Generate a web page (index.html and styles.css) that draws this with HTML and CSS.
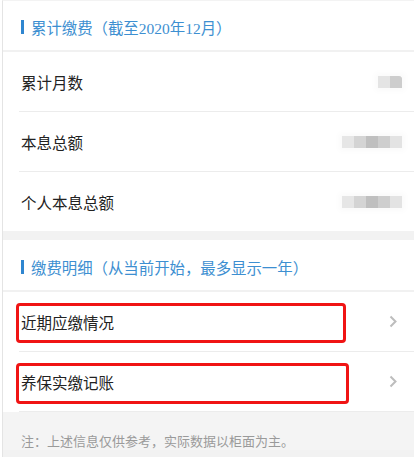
FILE: index.html
```html
<!DOCTYPE html>
<html lang="zh-CN">
<head>
    <meta charset="UTF-8">
    <meta name="viewport" content="width=device-width, initial-scale=1.0">
    <title>缴费查询</title>
    <link rel="stylesheet" href="styles.css">
</head>
<body>
    <div class="page">
        <div class="section">
            <div class="section-head">
                <span class="bar"></span>
                <span>累计缴费（截至<span class="num">2020</span>年<span class="num">12</span>月）</span>
            </div>
            <div class="row">
                <span class="label">累计月数</span>
                <span class="blur short">
                    <i class="c1"></i><i class="c2"></i>
                </span>
            </div>
            <div class="row">
                <span class="label">本息总额</span>
                <span class="blur">
                    <i class="c1"></i><i class="c2"></i><i class="c3"></i><i class="c4"></i><i class="c5"></i>
                </span>
            </div>
            <div class="row last">
                <span class="label">个人本息总额</span>
                <span class="blur">
                    <i class="c1"></i><i class="c2"></i><i class="c3"></i><i class="c4"></i><i class="c5"></i>
                </span>
            </div>
        </div>

        <div class="section">
            <div class="section-head">
                <span class="bar"></span>
                <span>缴费明细（从当前开始，最多显示一年）</span>
            </div>
            <div class="row link">
                <span class="label">近期应缴情况</span>
                <svg class="chevron" width="8" height="13" viewBox="0 0 8 13">
                    <polyline points="1.5,1.5 6.5,6.5 1.5,11.5" fill="none" stroke="#bdbdbd" stroke-width="2"/>
                </svg>
                <span class="mark"></span>
            </div>
            <div class="row link">
                <span class="label">养保实缴记账</span>
                <svg class="chevron" width="8" height="13" viewBox="0 0 8 13">
                    <polyline points="1.5,1.5 6.5,6.5 1.5,11.5" fill="none" stroke="#bdbdbd" stroke-width="2"/>
                </svg>
                <span class="mark wide"></span>
            </div>
        </div>

        <div class="note">注：上述信息仅供参考，实际数据以柜面为主。</div>
    </div>
</body>
</html>
```

FILE: styles.css
```css
body {
    margin: 0;
    background: #fff;
    font-family: "Noto Sans CJK SC", "Noto Sans", sans-serif;
    color: #222;
}

.page {
    margin-left: 2px;
    border-left: 1px solid #e4e4e4;
    border-top: 1px solid #f3f3f3;
    background: #f2f2f2;
    height: 456px;
}

.section {
    background: #fff;
}

.section + .section {
    margin-top: 9px;
}

/* Section titles */
.section-head {
    height: 51px;
    box-sizing: border-box;
    padding-top: 2px;
    border-bottom: 2px solid #f1f1f1;
    display: flex;
    align-items: center;
    padding-left: 18px;
    color: #3d8fd1;
    font-size: 15.4px;
}

.section + .section .section-head {
    height: 52px;
    padding-top: 3px;
}

.bar {
    width: 3px;
    height: 14px;
    background: #2f86d0;
    margin-right: 7px;
}

.num {
    font-family: "Liberation Serif", serif;
    font-size: 15.5px;
}

/* Rows */
.row {
    position: relative;
    margin-left: 16px;
    height: 59px;
    border-bottom: 1px solid #ececec;
    display: flex;
    align-items: center;
    padding-left: 2px;
    padding-right: 12px;
    font-size: 15.5px;
}

.row.last {
    border-bottom: none;
}

.label {
    flex: 1;
}

.link {
    padding-right: 17px;
}

.chevron {
    display: block;
}

/* Pixelated values */
.blur {
    display: flex;
    box-shadow: 0 0 6px 3px rgba(0, 0, 0, 0.025);
}

.blur i {
    width: 12px;
    height: 12px;
}

.blur .c1 { background: #e6e6e6; }
.blur .c2 { background: #d4d4d4; }
.blur .c3 { background: #bfbfbf; }
.blur .c4 { background: #cecece; }
.blur .c5 { background: #e3e3e3; }

.blur.short .c1 { background: #e4e4e4; }
.blur.short .c2 { background: #cdcdcd; border-top-right-radius: 3px; }

/* Red highlight boxes */
.mark {
    position: absolute;
    left: -3px;
    top: 11px;
    width: 330px;
    height: 40px;
    box-sizing: border-box;
    border: 3px solid #f01414;
    border-radius: 4px;
}

.mark.wide {
    width: 333px;
    height: 41px;
}

/* Footer note */
.note {
    background: #f4f4f4;
    padding: 20px 0 0 18px;
    font-size: 13px;
    line-height: 18px;
    color: #9a9a9a;
}
```
